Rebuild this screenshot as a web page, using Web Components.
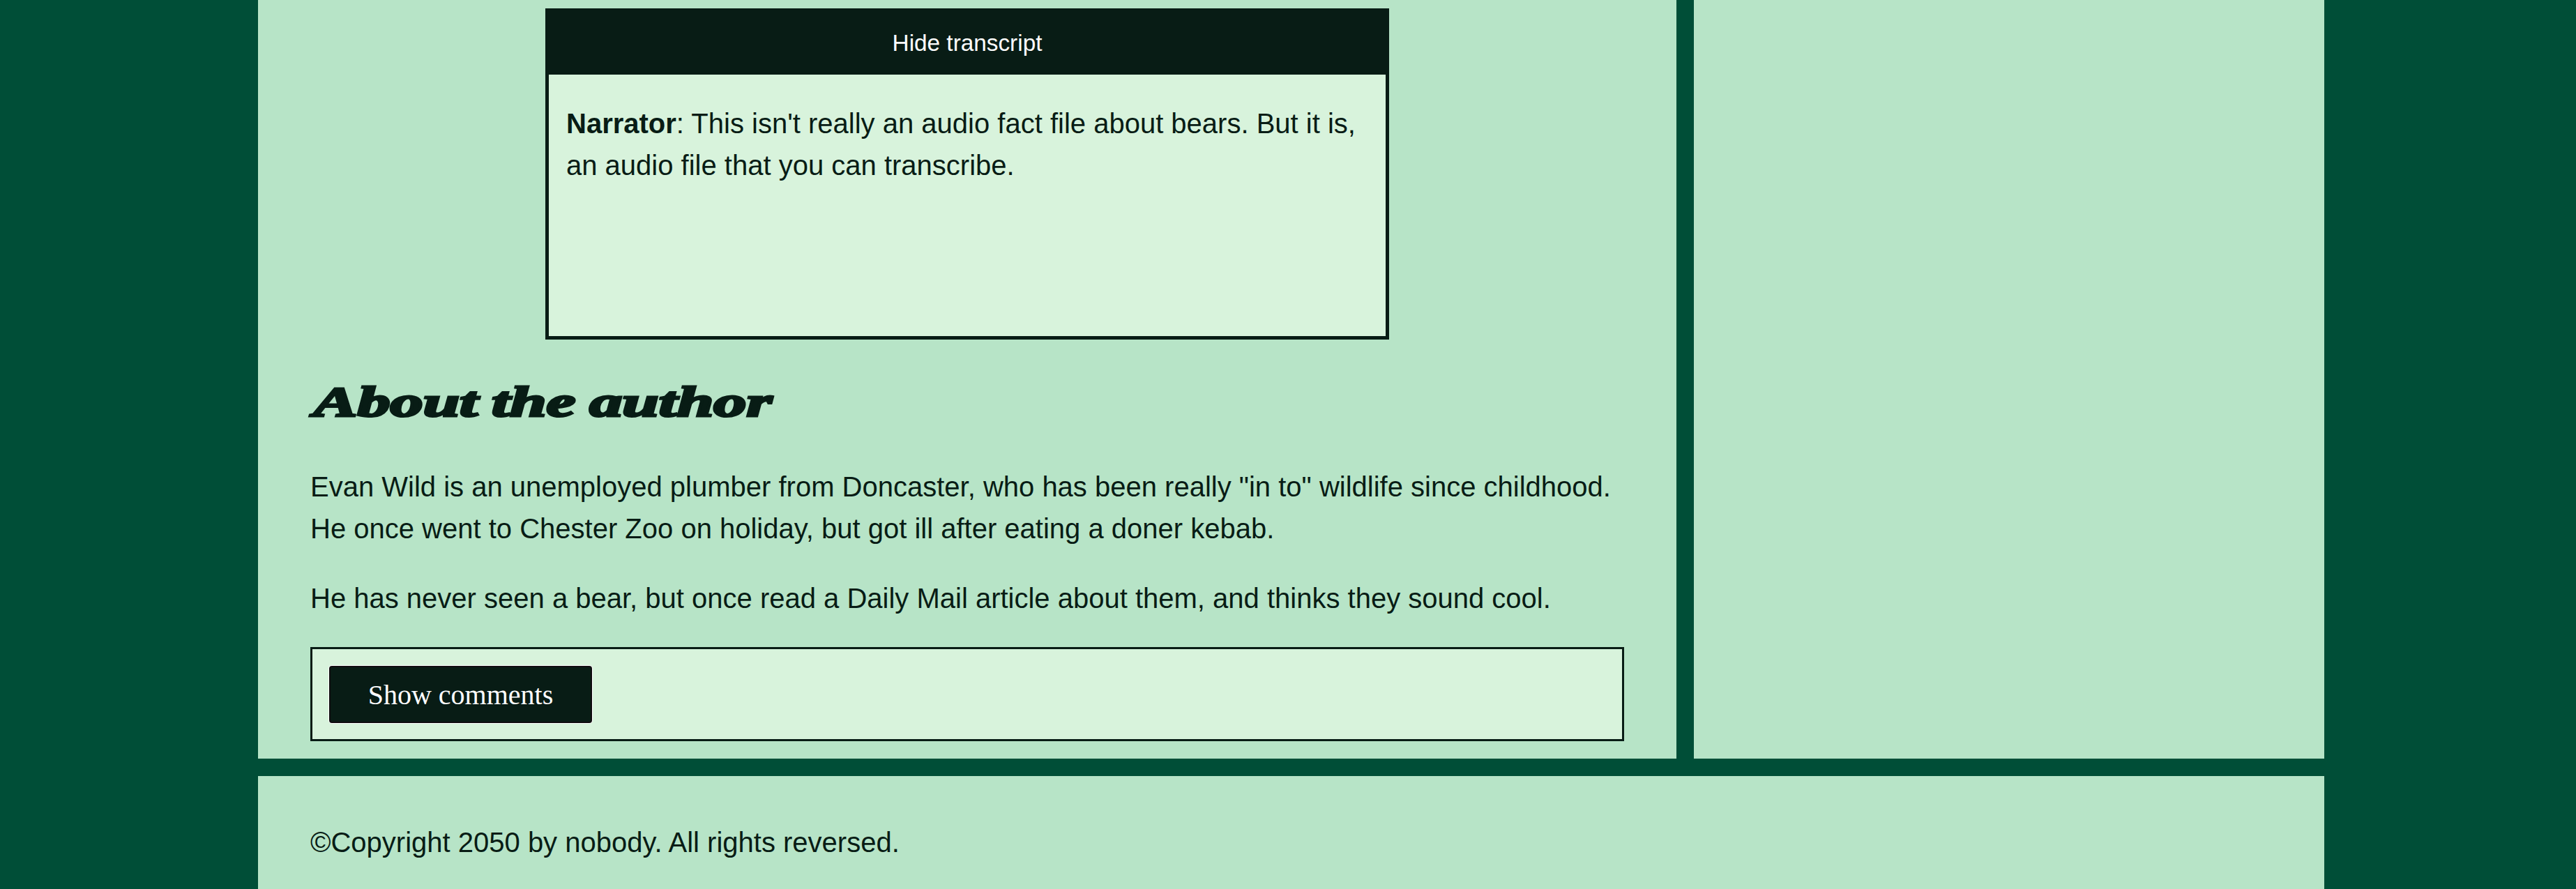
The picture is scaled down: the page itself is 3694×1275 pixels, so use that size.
<!DOCTYPE html>
<html lang="en">
<head>
<meta charset="utf-8">
<title>Bears</title>
<style>
html,body{margin:0;height:100%;overflow:hidden}
body{background:#004e37;color:#081c15;font:40px/60px "Liberation Sans",Arial,sans-serif}
</style>
</head>
<body>
<wild-page>
  <wild-article slot="main">
    <audio-transcript label="Hide transcript"><b>Narrator</b><span>: This isn't really an audio fact file about bears. But it is,</span><br><span>an audio file that you can transcribe.</span></audio-transcript>
    <display-heading>About the author</display-heading>
    <text-paragraph>Evan Wild is an unemployed plumber from Doncaster, who has been really "in to" wildlife since childhood. He once went to Chester Zoo on holiday, but got ill after eating a doner kebab.</text-paragraph>
    <text-paragraph>He has never seen a bear, but once read a Daily Mail article about them, and thinks they sound cool.</text-paragraph>
    <comment-section>Show comments</comment-section>
  </wild-article>
  <text-paragraph slot="footer">©Copyright 2050 by nobody. All rights reversed.</text-paragraph>
</wild-page>
<script>
const define = (name, html) => customElements.define(name, class extends HTMLElement {
  constructor() {
    super();
    this.attachShadow({mode: 'open'}).innerHTML = html;
  }
  connectedCallback() {
    const label = this.shadowRoot.querySelector('[data-label]');
    if (label) label.textContent = this.getAttribute('label');
  }
});

define('wild-page', `<style>
:host{display:grid;box-sizing:border-box;height:1275px;width:3694px;padding:0 361px 0 370px;grid-template-columns:2034px 904px;grid-template-rows:1088px 1fr;gap:25px}
main,aside,footer{background:#b7e4c7;min-width:0}
footer{grid-column:1/-1;box-sizing:border-box;padding:25px 75px 0}
</style><main><slot name="main"></slot></main><aside></aside><footer><slot name="footer"></slot></footer>`);

define('wild-article', `<style>
:host{display:flex;flex-direction:column;box-sizing:border-box;height:100%;padding:12px 75px 25px}
</style><slot></slot>`);

define('audio-transcript', `<style>
:host{display:flex;flex-direction:column;align-self:center;box-sizing:border-box;width:1210px;height:475px;border:5px solid #081c15;background:#d8f3dc}
button{flex:none;height:90px;border:0;padding:0;background:#081c15;color:#fff;font:33.333px "Liberation Sans",Arial,sans-serif}
p{margin:40px 25px}
</style><button data-label></button><p><slot></slot></p>`);

define('display-heading', `<style>
:host{display:block;box-sizing:border-box;height:141px;padding-top:39px}
h2{margin:0;font:italic 700 62px/100px "Liberation Serif","Times New Roman",serif;white-space:nowrap}
span{display:inline-block;padding-left:3px;transform:scaleX(1.52);transform-origin:0 0;word-spacing:-2.5px;-webkit-text-stroke:3.2px #081c15;stroke-linejoin:round}
</style><h2><span><slot></slot></span></h2>`);

define('text-paragraph', `<style>
:host{display:block}
p{margin:40px 0 0}
</style><p><slot></slot></p>`);

define('comment-section', `<style>
:host{display:block;box-sizing:border-box;height:135px;margin-top:40px;padding:24px;border:3px solid #081c15;background:#d8f3dc}
button{display:block;box-sizing:border-box;width:377px;height:82px;border:2px solid #100d10;border-radius:4px;box-shadow:0 0 0 1px #fff;padding:0;background:#081c15;color:#fff;font:40px "Liberation Serif","Times New Roman",serif}
</style><button><slot></slot></button>`);
</script>
</body>
</html>
